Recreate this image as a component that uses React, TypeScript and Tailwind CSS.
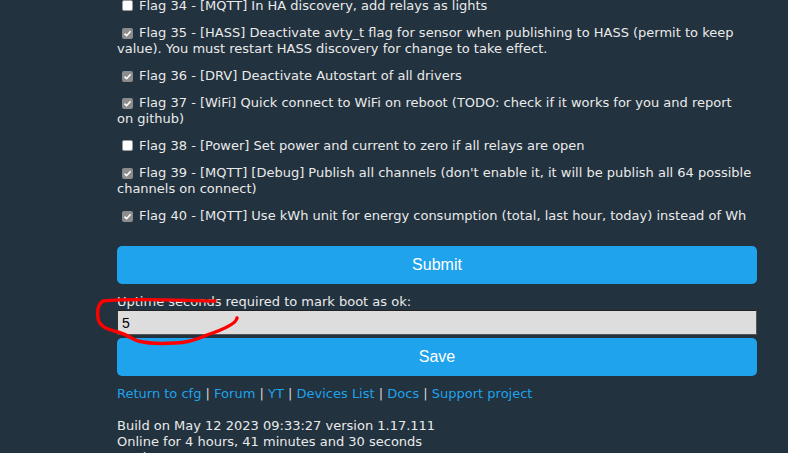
const flags: { n: number; text: string; on: boolean }[] = [
  { n: 34, text: "[MQTT] In HA discovery, add relays as lights", on: false },
  {
    n: 35,
    text: "[HASS] Deactivate avty_t flag for sensor when publishing to HASS (permit to keep value). You must restart HASS discovery for change to take effect.",
    on: true,
  },
  { n: 36, text: "[DRV] Deactivate Autostart of all drivers", on: true },
  {
    n: 37,
    text: "[WiFi] Quick connect to WiFi on reboot (TODO: check if it works for you and report on\u00a0github)",
    on: true,
  },
  { n: 38, text: "[Power] Set power and current to zero if all relays are open", on: false },
  {
    n: 39,
    text: "[MQTT] [Debug] Publish all channels (don't enable it, it will be publish all 64 possible channels on connect)",
    on: true,
  },
  { n: 40, text: "[MQTT] Use kWh unit for energy consumption (total, last hour, today) instead of Wh", on: true },
];

const links = ["Return to cfg", "Forum", "YT", "Devices List", "Docs", "Support project"];

function Box({ on }: { on: boolean }) {
  return (
    <span
      className={`inline-flex items-center justify-center w-[11px] h-[11px] rounded-[2px] ml-[5px] mr-[6px] align-[-1px] ${
        on ? "bg-[#8c8c8c]" : "bg-white border border-[#9a9a9a]"
      }`}
    >
      {on && (
        <svg width="9" height="9" viewBox="0 0 9 9">
          <path d="M1.5 4.6 L3.6 6.7 L7.6 2.2" fill="none" stroke="#fff" strokeWidth="1.6" />
        </svg>
      )}
    </span>
  );
}

export default function App() {
  return (
    <div className="w-[788px] h-[453px] overflow-hidden bg-[#22323f] text-[#eaeaea] font-['DejaVu_Sans','Verdana',sans-serif] text-[13px] leading-[16px]">
      <div className="relative ml-[117px] w-[640px] mt-[-2px]">
        <div className="flex flex-col gap-[11px] w-[636px]">
          {flags.map((f) => (
            <div key={f.n}>
              <Box on={f.on} />
              Flag {f.n} - {f.text}
            </div>
          ))}
        </div>

        <button className="mt-[22px] w-full h-[38px] rounded-[5px] bg-[#1fa3ec] text-white text-[16px] font-['Liberation_Sans',Arial,sans-serif]">
          Submit
        </button>

        <div className="mt-[10px]">Uptime seconds required to mark boot as ok:</div>
        <div className="h-[25px] bg-[#dddddd] border border-[#555] border-t-[#222] border-l-[#333] flex items-center pl-[4px] text-black text-[14px] font-['Liberation_Sans',Arial,sans-serif]">
          5
        </div>

        <button className="mt-[3px] w-full h-[38px] rounded-[5px] bg-[#1fa3ec] text-white text-[16px] font-['Liberation_Sans',Arial,sans-serif]">
          Save
        </button>

        <div className="mt-[10px]">
          {links.map((l, i) => (
            <span key={l}>
              {i > 0 && <span className="text-[#d8d8d8]"> | </span>}
              <span className="text-[#1fa3ec]">{l}</span>
            </span>
          ))}
        </div>

        <div className="mt-[16px]">Build on May 12 2023 09:33:27 version 1.17.111</div>
        <div>Online for 4 hours, 41 minutes and 30 seconds</div>
        <div>Device MAC: C8:47:8C:00:00:00</div>

        <svg
          className="absolute left-[-22px] top-[297px] pointer-events-none"
          width="150"
          height="55"
          viewBox="95 295 150 55"
        >
          <path
            d="M237 318 C236 324 222 330 207 335 C196 340 186 343 175 343 C160 344 146 343 138 341 C132 339 128 335 118 332 C106 329 99 326 98 318 C97 310 98 304 103 301 C130 298 170 300 215 301"
            fill="none"
            stroke="#ff0000"
            strokeWidth="3.4"
            strokeLinecap="round"
          />
        </svg>
      </div>
    </div>
  );
}
